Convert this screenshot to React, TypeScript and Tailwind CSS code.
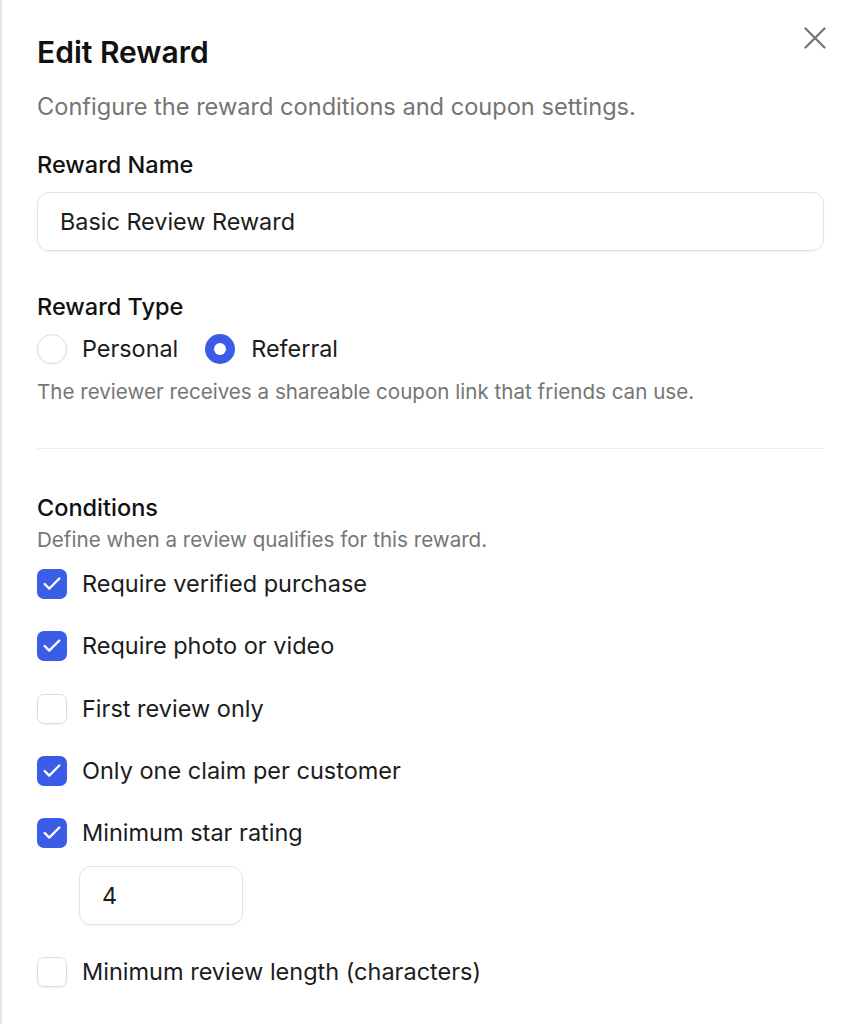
import { Check } from "lucide-react";

const conditions = [
  { label: "Require verified purchase", checked: true },
  { label: "Require photo or video", checked: true },
  { label: "First review only", checked: false },
  { label: "Only one claim per customer", checked: true },
  { label: "Minimum star rating", checked: true },
];

function Checkbox({ checked }: { checked: boolean }) {
  if (checked) {
    return (
      <span className="flex h-[30px] w-[30px] shrink-0 items-center justify-center rounded-[7px] bg-[#3b5ce6]">
        <Check className="h-[22px] w-[22px] text-white" strokeWidth={2.6} />
      </span>
    );
  }
  return (
    <span className="h-[30px] w-[30px] shrink-0 rounded-[7px] border border-[#dcdcdc] bg-white shadow-[0_1px_2px_rgba(0,0,0,0.06)]" />
  );
}

function CheckRow({ label, checked }: { label: string; checked: boolean }) {
  return (
    <label className="flex h-[30px] items-center gap-[15px]">
      <Checkbox checked={checked} />
      <span className="text-[23.5px] leading-[30px] text-[#1c1c1c]">{label}</span>
    </label>
  );
}

export default function App() {
  return (
    <div
      className="relative min-h-[1024px] border-l-2 border-[#e8e8e8] bg-white pl-[35px] pr-[27px] pt-[34px]"
      style={{ fontFamily: "Inter, 'Noto Sans', sans-serif" }}
    >
      <button className="absolute right-[25px] top-[27px] text-[#737373]">
        <svg width="22" height="22" viewBox="0 0 22 22" fill="none" stroke="currentColor" strokeWidth="2.2" strokeLinecap="round">
          <path d="M1.5 1.5l19 19M20.5 1.5l-19 19" />
        </svg>
      </button>

      <h1 className="text-[30px] font-semibold leading-[36px] text-[#111]">Edit Reward</h1>
      <p className="mt-[23px] text-[23.6px] leading-[28px] text-[#757575]">
        Configure the reward conditions and coupon settings.
      </p>

      <div className="mt-[30px] text-[23.5px] font-medium leading-[28px] text-[#111]">Reward Name</div>
      <div className="mt-[13px] flex h-[59px] items-center rounded-[12px] border border-[#e2e2e2] px-[22px] text-[23.4px] text-[#1c1c1c] shadow-[0_1px_2px_rgba(0,0,0,0.05)]">
        Basic Review Reward
      </div>

      <div className="mt-[42px] text-[23.5px] font-medium leading-[28px] text-[#111]">Reward Type</div>
      <div className="mt-[13px] flex h-[30px] items-center">
        <span className="h-[30px] w-[30px] rounded-full border border-[#dcdcdc] bg-white shadow-[0_1px_2px_rgba(0,0,0,0.06)]" />
        <span className="ml-[15px] text-[23.4px] leading-[30px] text-[#1c1c1c]">Personal</span>
        <span className="ml-[27px] flex h-[30px] w-[30px] items-center justify-center rounded-full bg-[#3b5ce6]">
          <span className="h-[12px] w-[12px] rounded-full bg-white" />
        </span>
        <span className="ml-[16px] text-[23.4px] leading-[30px] text-[#1c1c1c]">Referral</span>
      </div>
      <p className="mt-[16px] text-[20.6px] leading-[24px] text-[#767676]">
        The reviewer receives a shareable coupon link that friends can use.
      </p>

      <div className="mt-[44px] h-px bg-[#ececec]" />

      <div className="mt-[45px] text-[23.5px] font-medium leading-[28px] text-[#111]">Conditions</div>
      <p className="mt-[6px] text-[20.6px] leading-[24px] text-[#767676]">
        Define when a review qualifies for this reward.
      </p>

      <div className="mt-[17px] flex flex-col gap-[32.3px]">
        {conditions.map((c) => (
          <CheckRow key={c.label} label={c.label} checked={c.checked} />
        ))}
      </div>

      <div className="ml-[42px] mt-[18px] flex h-[59px] w-[164px] items-center rounded-[12px] border border-[#e2e2e2] px-[22px] text-[23.4px] text-[#1c1c1c] shadow-[0_1px_2px_rgba(0,0,0,0.05)]">
        4
      </div>

      <div className="mt-[32px]">
        <CheckRow label="Minimum review length (characters)" checked={false} />
      </div>
    </div>
  );
}
